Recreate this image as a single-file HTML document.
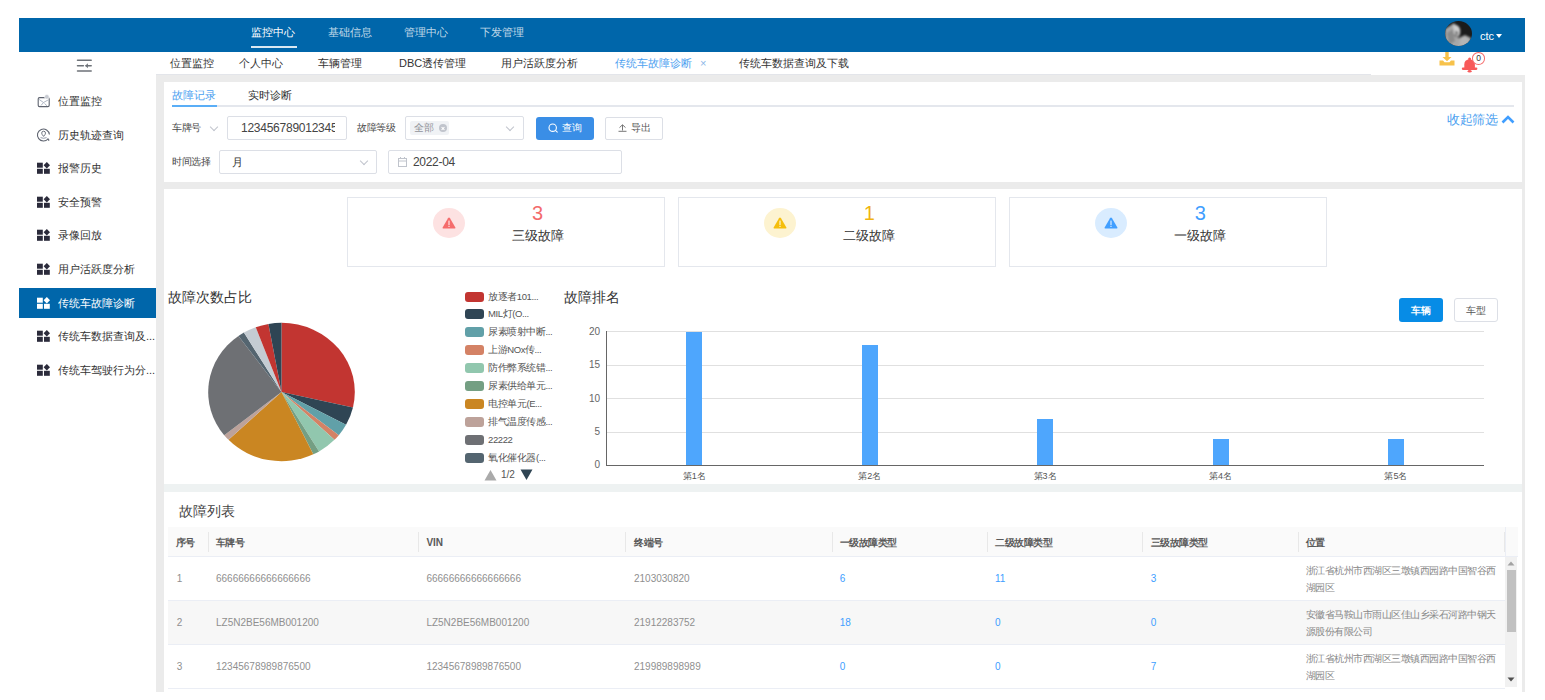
<!DOCTYPE html>
<html><head><meta charset="utf-8">
<style>
*{box-sizing:border-box;margin:0;padding:0}
html,body{width:1545px;height:700px;overflow:hidden;background:#fff;font-family:"Liberation Sans",sans-serif;color:#333}
.a{position:absolute;white-space:nowrap}
#hdr{left:19px;top:18px;width:1506px;height:34px;background:#0066AA}
.nav{top:25px;height:14px;line-height:14px;font-size:11px;color:rgba(255,255,255,.75)}
.nav.on{color:#fff}
#side{left:19px;top:52px;width:137px;height:639px;background:#fff}
.si{left:19px;width:137px;height:30px}
.si .ic{position:absolute;left:18px;top:9px;width:13px;height:12px}
.si .tx{position:absolute;left:39px;top:0;line-height:30px;font-size:11px;color:#333;width:98px;overflow:hidden;text-overflow:ellipsis}
.si.on{background:#0066AA}
.si.on .tx{color:#fff}
#tabs{left:156px;top:52px;width:1369px;height:22px;background:#fff}
.tb{top:56px;line-height:14px;font-size:11px;color:#333}
#main{left:156px;top:74px;width:1369px;height:618px;background:#EBEBEB}
.pn{position:absolute;background:#fff}
.lbl{font-size:9.5px;color:#4a4a4a;line-height:14px;letter-spacing:-0.5px}
.box{position:absolute;border:1px solid #DCDFE6;border-radius:2px;background:#fff}
.chev{position:absolute;width:6px;height:6px;border-right:1px solid #C0C4CC;border-bottom:1px solid #C0C4CC;transform:rotate(45deg)}
.card{position:absolute;top:197px;height:70px;width:318px;border:1px solid #E4E7ED}
.num{position:absolute;font-size:20px;line-height:20px;text-align:center;width:60px}
.clab{position:absolute;font-size:12.5px;line-height:14px;color:#333;text-align:center;width:80px}
.circ{position:absolute;width:32px;height:30px;border-radius:50%}
.lg{position:absolute;left:465px;height:18px}
.lg i{position:absolute;left:0;top:4px;width:19px;height:10px;border-radius:3px}
.lg span{position:absolute;white-space:nowrap;left:23px;top:0;line-height:18px;font-size:9.5px;color:#555;letter-spacing:-0.4px}
.yl{position:absolute;font-size:10px;color:#666;text-align:right;width:20px;line-height:10px}
.gl{position:absolute;left:607px;width:877px;height:1px;background:#E0E0E0}
.bar{position:absolute;width:16px;background:#4EA6FD}
.xl{position:absolute;font-size:9px;color:#555;line-height:10px;width:40px;text-align:center}
.th{position:absolute;top:528px;line-height:30px;font-size:9.5px;font-weight:bold;color:#595959;letter-spacing:-0.5px}
.cd{position:absolute;width:1px;height:20px;top:532px;background:#E8E8E8}
.td{position:absolute;font-size:10px;color:#8F8F8F;line-height:14px}
.tdb{color:#409EFF}
.loc{position:absolute;font-size:9.5px;color:#888;line-height:17px;width:192px;white-space:normal;letter-spacing:-0.5px}
</style></head><body>
<!-- header -->
<div class="a" id="hdr"></div>
<div class="a nav on" style="left:251px">监控中心</div>
<div class="a" style="left:251px;top:46px;width:46px;height:2px;background:rgba(255,255,255,.85)"></div>
<div class="a nav" style="left:328px">基础信息</div>
<div class="a nav" style="left:404px">管理中心</div>
<div class="a nav" style="left:480px">下发管理</div>
<svg class="a" style="left:1445px;top:21px" width="27" height="25" viewBox="0 0 27 25"><defs><clipPath id="av"><ellipse cx="13.5" cy="12.5" rx="13.5" ry="12.5"/></clipPath><filter id="bl"><feGaussianBlur stdDeviation="0.9"/></filter></defs><g clip-path="url(#av)"><rect width="27" height="25" fill="#1b1b1b"/><g filter="url(#bl)"><path d="M0 8L9 2L12 6L9 14L14 17L20 14L26 17L25 27H0Z" fill="#a8a8a8"/><path d="M8 4Q13 3 15 8Q16 13 13 16L9 13Z" fill="#cfcfcf"/><path d="M2 12L8 8L10 20L4 24Z" fill="#8a8a8a"/><path d="M16 16Q22 14 24 19L22 25H14Z" fill="#b5b5b5"/><path d="M10 10L13 11L12 15Z" fill="#333"/></g></g></svg>
<div class="a" style="left:1480px;top:30px;font-size:11px;line-height:13px;color:#fff">ctc</div>
<div class="a" style="left:1495.5px;top:34px;width:0;height:0;border-left:3.6px solid transparent;border-right:3.6px solid transparent;border-top:4px solid #fff"></div>

<!-- sidebar -->
<div class="a" id="side"></div>
<svg class="a" style="left:76px;top:58px" width="17" height="16" viewBox="0 0 17 16"><g stroke="#6D7278" stroke-width="1.5" stroke-linecap="round" fill="none"><path d="M1.5 2.3H15.2M1.5 7.7H7.4M10 7.7H15.2M1.5 13H15.2"/></g><path d="M9.2 7.7L11.9 5.2V10.2Z" fill="#6D7278"/></svg>

<div class="a si" style="top:86.0px"><svg class="ic" viewBox="0 0 13 12" style="overflow:visible"><rect x="1.2" y="2.6" width="11" height="9" rx="1.3" fill="none" stroke="#5F6470" stroke-width="1.1"/><path d="M2.2 4.5L6.5 7.5L4 10.5M6.5 7.5L11 5M7.5 8.5L10 10.8" fill="none" stroke="#9AA3B5" stroke-width="0.8"/><circle cx="9.8" cy="1.8" r="2.3" fill="#C8CBD2" stroke="#fff" stroke-width="0.6"/></svg><div class="tx">位置监控</div></div>
<div class="a si" style="top:119.6px"><svg class="ic" viewBox="0 0 13 12" style="overflow:visible"><path d="M11.3 9.5A6 6 0 1 1 12.4 5.5" fill="none" stroke="#5F6470" stroke-width="1.1"/><path d="M6.6 7.4Q4.6 5.2 4.7 4.1A1.9 1.9 0 0 1 8.5 4.1Q8.6 5.2 6.6 7.4Z" fill="none" stroke="#5F6470" stroke-width="0.9"/><path d="M3.6 8.6Q6.6 10 9.6 8.6" fill="none" stroke="#8A90A0" stroke-width="0.9"/><path d="M10.6 10L12.2 11.4" stroke="#5F6470" stroke-width="1.3"/></svg><div class="tx">历史轨迹查询</div></div>
<div class="a si" style="top:153.2px"><svg class="ic" viewBox="0 0 13 12"><rect x="0" y="0.7" width="5.8" height="5" fill="#2B2B3B"/><rect x="0" y="6.8" width="5.8" height="5" fill="#2B2B3B"/><rect x="7" y="6.8" width="5.8" height="5" fill="#2B2B3B"/><path d="M9.8 0L13 3.2L9.8 6.4L6.6 3.2Z" fill="#2B2B3B"/></svg><div class="tx">报警历史</div></div>
<div class="a si" style="top:186.8px"><svg class="ic" viewBox="0 0 13 12"><rect x="0" y="0.7" width="5.8" height="5" fill="#2B2B3B"/><rect x="0" y="6.8" width="5.8" height="5" fill="#2B2B3B"/><rect x="7" y="6.8" width="5.8" height="5" fill="#2B2B3B"/><path d="M9.8 0L13 3.2L9.8 6.4L6.6 3.2Z" fill="#2B2B3B"/></svg><div class="tx">安全预警</div></div>
<div class="a si" style="top:220.4px"><svg class="ic" viewBox="0 0 13 12"><rect x="0" y="0.7" width="5.8" height="5" fill="#2B2B3B"/><rect x="0" y="6.8" width="5.8" height="5" fill="#2B2B3B"/><rect x="7" y="6.8" width="5.8" height="5" fill="#2B2B3B"/><path d="M9.8 0L13 3.2L9.8 6.4L6.6 3.2Z" fill="#2B2B3B"/></svg><div class="tx">录像回放</div></div>
<div class="a si" style="top:254.0px"><svg class="ic" viewBox="0 0 13 12"><rect x="0" y="0.7" width="5.8" height="5" fill="#2B2B3B"/><rect x="0" y="6.8" width="5.8" height="5" fill="#2B2B3B"/><rect x="7" y="6.8" width="5.8" height="5" fill="#2B2B3B"/><path d="M9.8 0L13 3.2L9.8 6.4L6.6 3.2Z" fill="#2B2B3B"/></svg><div class="tx">用户活跃度分析</div></div>
<div class="a si on" style="top:287.6px"><svg class="ic" viewBox="0 0 13 12"><rect x="0" y="0.7" width="5.8" height="5" fill="#fff"/><rect x="0" y="6.8" width="5.8" height="5" fill="#fff"/><rect x="7" y="6.8" width="5.8" height="5" fill="#fff"/><path d="M9.8 0L13 3.2L9.8 6.4L6.6 3.2Z" fill="#fff"/></svg><div class="tx">传统车故障诊断</div></div>
<div class="a si" style="top:321.2px"><svg class="ic" viewBox="0 0 13 12"><rect x="0" y="0.7" width="5.8" height="5" fill="#2B2B3B"/><rect x="0" y="6.8" width="5.8" height="5" fill="#2B2B3B"/><rect x="7" y="6.8" width="5.8" height="5" fill="#2B2B3B"/><path d="M9.8 0L13 3.2L9.8 6.4L6.6 3.2Z" fill="#2B2B3B"/></svg><div class="tx">传统车数据查询及...</div></div>
<div class="a si" style="top:354.8px"><svg class="ic" viewBox="0 0 13 12"><rect x="0" y="0.7" width="5.8" height="5" fill="#2B2B3B"/><rect x="0" y="6.8" width="5.8" height="5" fill="#2B2B3B"/><rect x="7" y="6.8" width="5.8" height="5" fill="#2B2B3B"/><path d="M9.8 0L13 3.2L9.8 6.4L6.6 3.2Z" fill="#2B2B3B"/></svg><div class="tx">传统车驾驶行为分...</div></div>
<div id="tabs" class="a"></div>
<div class="a tb" style="left:170px">位置监控</div>
<div class="a tb" style="left:239px">个人中心</div>
<div class="a tb" style="left:318px">车辆管理</div>
<div class="a tb" style="left:399px">DBC透传管理</div>
<div class="a tb" style="left:501px">用户活跃度分析</div>
<div class="a tb" style="left:615px;color:#4DA1F0">传统车故障诊断</div>
<div class="a tb" style="left:700px;color:#8cb8e8">×</div>
<div class="a tb" style="left:739px">传统车数据查询及下载</div>

<div id="main" class="a"></div>
<div class="a" style="left:156px;top:74px;width:1215px;height:1px;background:#E3E5EA"></div>
<div class="a" style="left:1371px;top:74px;width:154px;height:1px;background:#fff"></div>
<div class="pn" style="left:164px;top:82px;width:1358px;height:100px"></div>
<div class="pn" style="left:164px;top:189px;width:1358px;height:295px"></div>
<div class="a" style="left:164px;top:484px;width:1358px;height:7.5px;background:#EEF2F2"></div>
<div class="pn" style="left:164px;top:491.5px;width:1358px;height:200.5px"></div>

<!-- panel1 -->
<div class="a" style="left:172px;top:88px;line-height:14px;font-size:11px;color:#4DA1F0">故障记录</div>
<div class="a" style="left:248px;top:88px;line-height:14px;font-size:11px;color:#333">实时诊断</div>
<div class="a" style="left:172px;top:105px;width:1342px;height:2px;background:#E4E7ED"></div>
<div class="a" style="left:172px;top:105px;width:45px;height:2px;background:#5AAEF7"></div>
<div class="a lbl" style="left:172px;top:121px">车牌号</div>
<div class="chev" style="left:211px;top:124px"></div>
<div class="box" style="left:227px;top:116px;width:120px;height:24px;overflow:hidden"><div style="position:absolute;left:13px;top:0;line-height:22px;font-size:12px;color:#444;width:94px;overflow:hidden;letter-spacing:-0.25px">123456789012345</div></div>
<div class="a lbl" style="left:357px;top:121px">故障等级</div>
<div class="box" style="left:405px;top:116px;width:119px;height:24px"></div>
<div class="a" style="left:410px;top:121px;width:39px;height:14px;background:#F0F2F5;border-radius:2px"></div>
<div class="a" style="left:414px;top:121px;line-height:14px;font-size:9.5px;color:#909399">全部</div>
<div class="a" style="left:439px;top:124px;width:8px;height:8px;border-radius:50%;background:#C0C4CC"></div>
<div class="a" style="left:441px;top:127.5px;width:4px;height:1px;background:#fff;transform:rotate(45deg)"></div>
<div class="a" style="left:441px;top:127.5px;width:4px;height:1px;background:#fff;transform:rotate(-45deg)"></div>
<div class="chev" style="left:507px;top:124px"></div>
<div class="a" style="left:536px;top:117px;width:58px;height:23px;background:#3A8EE6;border-radius:3px"></div>
<svg class="a" style="left:548px;top:123px" width="11" height="11" viewBox="0 0 11 11"><circle cx="4.7" cy="4.7" r="3.7" fill="none" stroke="#fff" stroke-width="1.1"/><path d="M7.4 7.4L9.6 9.4" stroke="#fff" stroke-width="1.1"/></svg>
<div class="a" style="left:562px;top:121px;line-height:14px;font-size:9.5px;letter-spacing:-0.5px;color:#fff">查询</div>
<div class="box" style="left:605px;top:117px;width:58px;height:23px"></div>
<svg class="a" style="left:618px;top:124px" width="9" height="8" viewBox="0 0 9 8"><path d="M1.5 3.6L4.5 0.8L7.5 3.6M4.5 1V6.5M0.5 7.3H8.5" fill="none" stroke="#666" stroke-width="0.9"/></svg>
<div class="a" style="left:631px;top:121px;line-height:14px;font-size:9.5px;letter-spacing:-0.5px;color:#555">导出</div>
<div class="a" style="left:1447px;top:112px;line-height:16px;font-size:12.5px;color:#4DA1F0;letter-spacing:-0.3px">收起筛选</div>
<svg class="a" style="left:1501px;top:115px" width="14" height="9" viewBox="0 0 14 9"><path d="M1.5 7.5L7 2L12.5 7.5" fill="none" stroke="#409EFF" stroke-width="2.6"/></svg>
<div class="a lbl" style="left:172px;top:155px">时间选择</div>
<div class="box" style="left:219px;top:150px;width:158px;height:24px"></div>
<div class="a" style="left:232px;top:155px;line-height:14px;font-size:11px;color:#333">月</div>
<div class="chev" style="left:361px;top:158px"></div>
<div class="box" style="left:388px;top:150px;width:234px;height:24px"></div>
<svg class="a" style="left:398px;top:157px" width="9" height="10" viewBox="0 0 9 10"><rect x="0.5" y="1.5" width="8" height="8" fill="none" stroke="#C0C4CC"/><path d="M0.5 4H8.5M2.5 0V2M6.5 0V2" stroke="#C0C4CC"/></svg>
<div class="a" style="left:413px;top:155px;line-height:14px;font-size:12px;color:#444;letter-spacing:-0.3px">2022-04</div>

<!-- panel2 -->
<div class="card" style="left:346.5px"></div>
<div class="circ" style="left:432.5px;top:207.5px;background:#FDE2E2"></div>
<svg class="a" style="left:441.5px;top:216.5px" width="14" height="12" viewBox="0 0 14 12"><path d="M7 0.6Q7.6 0.6 8 1.2L13.4 10.4Q13.7 11.4 12.8 11.4H1.2Q0.3 11.4 0.6 10.4L6 1.2Q6.4 0.6 7 0.6Z" fill="#F56C6C"/><rect x="6.4" y="3.6" width="1.2" height="4.4" fill="#FDE2E2"/><rect x="6.4" y="8.8" width="1.2" height="1.2" fill="#FDE2E2"/></svg>
<div class="num" style="left:507.5px;top:203.3px;color:#F36B6B">3</div>
<div class="clab" style="left:497.5px;top:229px">三级故障</div>
<div class="card" style="left:678.3px"></div>
<div class="circ" style="left:764.3px;top:207.5px;background:#FDF3D0"></div>
<svg class="a" style="left:773.3px;top:216.5px" width="14" height="12" viewBox="0 0 14 12"><path d="M7 0.6Q7.6 0.6 8 1.2L13.4 10.4Q13.7 11.4 12.8 11.4H1.2Q0.3 11.4 0.6 10.4L6 1.2Q6.4 0.6 7 0.6Z" fill="#F5BE0B"/><rect x="6.4" y="3.6" width="1.2" height="4.4" fill="#FDF3D0"/><rect x="6.4" y="8.8" width="1.2" height="1.2" fill="#FDF3D0"/></svg>
<div class="num" style="left:839.3px;top:203.3px;color:#F0B411">1</div>
<div class="clab" style="left:829.3px;top:229px">二级故障</div>
<div class="card" style="left:1009.4px"></div>
<div class="circ" style="left:1095.4px;top:207.5px;background:#D9ECFF"></div>
<svg class="a" style="left:1104.4px;top:216.5px" width="14" height="12" viewBox="0 0 14 12"><path d="M7 0.6Q7.6 0.6 8 1.2L13.4 10.4Q13.7 11.4 12.8 11.4H1.2Q0.3 11.4 0.6 10.4L6 1.2Q6.4 0.6 7 0.6Z" fill="#409EFF"/><rect x="6.4" y="3.6" width="1.2" height="4.4" fill="#D9ECFF"/><rect x="6.4" y="8.8" width="1.2" height="1.2" fill="#D9ECFF"/></svg>
<div class="num" style="left:1170.4px;top:203.3px;color:#409EFF">3</div>
<div class="clab" style="left:1160.4px;top:229px">一级故障</div>
<div class="a" style="left:168px;top:289px;line-height:17px;font-size:14px;color:#333">故障次数占比</div>
<svg class="a" style="left:0;top:0" width="1545" height="700"><path d="M281.5 392L281.50 322.80A73.3 69.2 0 0 1 352.96 407.40Z" fill="#c23531"/>
<path d="M281.5 392L352.96 407.40A73.3 69.2 0 0 1 346.05 424.79Z" fill="#2f4554"/>
<path d="M281.5 392L346.05 424.79A73.3 69.2 0 0 1 338.81 435.15Z" fill="#61a0a8"/>
<path d="M281.5 392L338.81 435.15A73.3 69.2 0 0 1 334.48 439.82Z" fill="#d48265"/>
<path d="M281.5 392L334.48 439.82A73.3 69.2 0 0 1 319.10 451.40Z" fill="#91c7ae"/>
<path d="M281.5 392L319.10 451.40A73.3 69.2 0 0 1 313.30 454.35Z" fill="#749f83"/>
<path d="M281.5 392L313.30 454.35A73.3 69.2 0 0 1 228.52 439.82Z" fill="#ca8622"/>
<path d="M281.5 392L228.52 439.82A73.3 69.2 0 0 1 224.19 435.15Z" fill="#bda29a"/>
<path d="M281.5 392L224.19 435.15A73.3 69.2 0 0 1 238.42 336.02Z" fill="#6e7074"/>
<path d="M281.5 392L238.42 336.02A73.3 69.2 0 0 1 243.90 332.60Z" fill="#546570"/>
<path d="M281.5 392L243.90 332.60A73.3 69.2 0 0 1 255.74 327.21Z" fill="#c4ccd3"/>
<path d="M281.5 392L255.74 327.21A73.3 69.2 0 0 1 268.41 323.91Z" fill="#c23531"/>
<path d="M281.5 392L268.41 323.91A73.3 69.2 0 0 1 281.50 322.80Z" fill="#2f4554"/>
</svg>
<div class="lg" style="top:287.5px"><i style="background:#c23531"></i><span>放逐者101...</span></div>
<div class="lg" style="top:305.4px"><i style="background:#2f4554"></i><span>MIL灯(O...</span></div>
<div class="lg" style="top:323.4px"><i style="background:#61a0a8"></i><span>尿素喷射中断...</span></div>
<div class="lg" style="top:341.4px"><i style="background:#d48265"></i><span>上游NOx传...</span></div>
<div class="lg" style="top:359.3px"><i style="background:#91c7ae"></i><span>防作弊系统错...</span></div>
<div class="lg" style="top:377.2px"><i style="background:#749f83"></i><span>尿素供给单元...</span></div>
<div class="lg" style="top:395.2px"><i style="background:#ca8622"></i><span>电控单元(E...</span></div>
<div class="lg" style="top:413.1px"><i style="background:#bda29a"></i><span>排气温度传感...</span></div>
<div class="lg" style="top:431.1px"><i style="background:#6e7074"></i><span>22222</span></div>
<div class="lg" style="top:449.0px"><i style="background:#546570"></i><span>氧化催化器(...</span></div>
<svg class="a" style="left:484px;top:469px" width="13" height="12" viewBox="0 0 13 12"><path d="M6.5 1L12.5 11.5H0.5Z" fill="#AAAAAA"/></svg>
<div class="a" style="left:501px;top:469px;line-height:12px;font-size:10px;color:#555">1/2</div>
<svg class="a" style="left:520px;top:469px" width="13" height="12" viewBox="0 0 13 12"><path d="M0.5 0.5H12.5L6.5 11Z" fill="#2f4554"/></svg>
<div class="a" style="left:564px;top:289px;line-height:17px;font-size:14px;color:#333">故障排名</div>
<div class="gl" style="top:331.3px"></div>
<div class="yl" style="left:580px;top:326.8px">20</div>
<div class="gl" style="top:364.7px"></div>
<div class="yl" style="left:580px;top:360.2px">15</div>
<div class="gl" style="top:398.1px"></div>
<div class="yl" style="left:580px;top:393.6px">10</div>
<div class="gl" style="top:431.5px"></div>
<div class="yl" style="left:580px;top:427.0px">5</div>
<div class="yl" style="left:580px;top:460.4px">0</div>
<div class="a" style="left:606px;top:331px;width:1px;height:135px;background:#666"></div>
<div class="a" style="left:606px;top:465px;width:878px;height:1px;background:#666"></div>
<div class="bar" style="left:686.3px;top:331.8px;height:133.6px"></div>
<div class="xl" style="left:674.3px;top:471px">第1名</div>
<div class="bar" style="left:861.7px;top:345.2px;height:120.2px"></div>
<div class="xl" style="left:849.7px;top:471px">第2名</div>
<div class="bar" style="left:1037.1px;top:418.6px;height:46.8px"></div>
<div class="xl" style="left:1025.1px;top:471px">第3名</div>
<div class="bar" style="left:1212.5px;top:438.7px;height:26.7px"></div>
<div class="xl" style="left:1200.5px;top:471px">第4名</div>
<div class="bar" style="left:1387.9px;top:438.7px;height:26.7px"></div>
<div class="xl" style="left:1375.9px;top:471px">第5名</div>
<div class="a" style="left:1399px;top:298px;width:44px;height:24px;background:#078CE6;border-radius:3px;color:#fff;font-size:9.5px;line-height:26px;text-align:center;font-weight:bold">车辆</div>
<div class="a" style="left:1454px;top:298px;width:44px;height:24px;border:1px solid #DCDFE6;border-radius:3px;color:#555;font-size:9.5px;line-height:24px;text-align:center">车型</div>

<!-- panel3 -->
<div class="a" style="left:179px;top:503px;line-height:17px;font-size:14px;color:#444">故障列表</div>
<div class="a" style="left:168px;top:527px;width:1350px;height:30px;background:#FAFAFA;border-bottom:1px solid #EBEEF5"></div>
<div class="th" style="left:175.7px">序号</div>
<div class="th" style="left:215.7px">车牌号</div>
<div class="th" style="left:426.4px;font-size:10px;letter-spacing:0">VIN</div>
<div class="th" style="left:634px">终端号</div>
<div class="th" style="left:839.7px">一级故障类型</div>
<div class="th" style="left:995px">二级故障类型</div>
<div class="th" style="left:1150.8px">三级故障类型</div>
<div class="th" style="left:1305.7px">位置</div>
<div class="cd" style="left:207.9px"></div>
<div class="cd" style="left:418.0px"></div>
<div class="cd" style="left:625.0px"></div>
<div class="cd" style="left:831.7px"></div>
<div class="cd" style="left:986.6px"></div>
<div class="cd" style="left:1142.4px"></div>
<div class="cd" style="left:1297.7px"></div>
<div class="cd" style="left:1504.2px"></div>
<div class="a" style="left:168px;top:557px;width:1337px;height:44px;background:#fff;border-bottom:1px solid #EBEEF5"></div>
<div class="td" style="left:176.7px;top:572px">1</div>
<div class="td" style="left:216px;top:572px">66666666666666666</div>
<div class="td" style="left:426.4px;top:572px">66666666666666666</div>
<div class="td" style="left:634px;top:572px">2103030820</div>
<div class="td tdb" style="left:839.7px;top:572px">6</div>
<div class="td tdb" style="left:995px;top:572px">11</div>
<div class="td tdb" style="left:1150.8px;top:572px">3</div>
<div class="loc" style="left:1305.7px;top:562px">浙江省杭州市西湖区三墩镇西园路中国智谷西湖园区</div>
<div class="a" style="left:168px;top:601px;width:1337px;height:44px;background:#F7F7F7;border-bottom:1px solid #EBEEF5"></div>
<div class="td" style="left:176.7px;top:616px">2</div>
<div class="td" style="left:216px;top:616px">LZ5N2BE56MB001200</div>
<div class="td" style="left:426.4px;top:616px">LZ5N2BE56MB001200</div>
<div class="td" style="left:634px;top:616px">21912283752</div>
<div class="td tdb" style="left:839.7px;top:616px">18</div>
<div class="td tdb" style="left:995px;top:616px">0</div>
<div class="td tdb" style="left:1150.8px;top:616px">0</div>
<div class="loc" style="left:1305.7px;top:606px">安徽省马鞍山市雨山区佳山乡采石河路中钢天源股份有限公司</div>
<div class="a" style="left:168px;top:645px;width:1337px;height:44px;background:#fff;border-bottom:1px solid #EBEEF5"></div>
<div class="td" style="left:176.7px;top:660px">3</div>
<div class="td" style="left:216px;top:660px">12345678989876500</div>
<div class="td" style="left:426.4px;top:660px">12345678989876500</div>
<div class="td" style="left:634px;top:660px">219989898989</div>
<div class="td tdb" style="left:839.7px;top:660px">0</div>
<div class="td tdb" style="left:995px;top:660px">0</div>
<div class="td tdb" style="left:1150.8px;top:660px">7</div>
<div class="loc" style="left:1305.7px;top:650px">浙江省杭州市西湖区三墩镇西园路中国智谷西湖园区</div>
<div class="a" style="left:1505px;top:527px;width:13px;height:30px;background:#FAFAFA;border-left:1px solid #EBEEF5;border-bottom:1px solid #EBEEF5"></div>
<div class="a" style="left:1505px;top:557px;width:12px;height:130px;background:#F1F1F1"></div>
<div class="a" style="left:1506.5px;top:570px;width:9.5px;height:62px;background:#C1C1C1"></div>
<svg class="a" style="left:1507px;top:561px" width="8" height="5" viewBox="0 0 8 5"><path d="M4 0.5L7.5 4.5H0.5Z" fill="#A3A3A3"/></svg>
<svg class="a" style="left:1507px;top:677px" width="8" height="5" viewBox="0 0 8 5"><path d="M0.5 0.5H7.5L4 4.5Z" fill="#505050"/></svg>
<svg class="a" style="left:1439px;top:52px" width="16" height="14" viewBox="0 0 16 14"><path d="M6.3 0H9.7V5H12.5L8 9.3L3.5 5H6.3Z" fill="#F7C24B"/><path d="M0.5 8.5H4L5.5 10.2H10.5L12 8.5H15.5V13.5H0.5Z" fill="#F7C24B"/></svg>
<svg class="a" style="left:1461px;top:56px" width="17" height="17" viewBox="0 0 17 17"><circle cx="8.6" cy="3" r="1.5" fill="#F85A5A"/><path d="M3.3 12.2V8.6Q3.3 3.6 8.6 3.6Q13.9 3.6 13.9 8.6V12.2Z" fill="#F85A5A"/><rect x="0.8" y="11.6" width="15.6" height="2.3" rx="1.1" fill="#F85A5A"/><ellipse cx="8.6" cy="15.2" rx="2" ry="1.3" fill="#F85A5A"/></svg>
<div class="a" style="left:1472px;top:52px;width:13px;height:12.5px;border-radius:50%;background:#fff;border:1px solid #F56C6C;font-size:8.5px;line-height:10.5px;text-align:center;color:#333">0</div>
</body></html>
